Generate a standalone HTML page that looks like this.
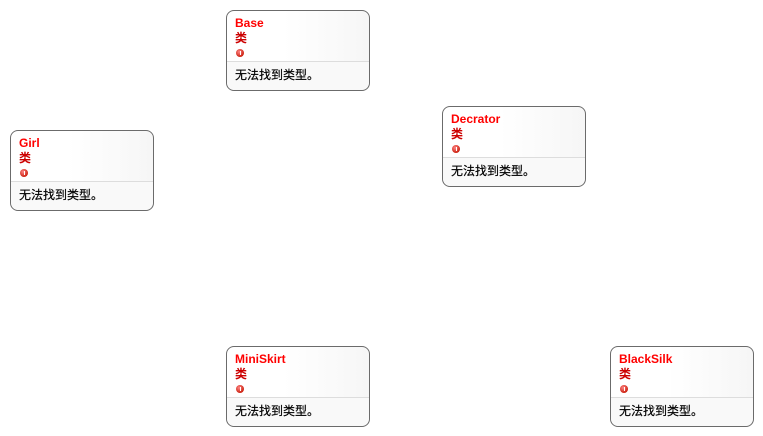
<!DOCTYPE html><html><head><style>
body{margin:0;width:763px;height:436px;background:#fff;position:relative;overflow:hidden;font-family:"Liberation Sans","Noto Sans CJK SC",sans-serif}
.b{position:absolute;width:142px;height:79px;border:1px solid #6b6b6b;border-radius:8px;background:linear-gradient(90deg,#fff 40%,#f6f6f6);}
.t{position:absolute;left:8px;top:5px;color:#f00;font-weight:bold;font-size:12px}
.c{position:absolute;left:8px;top:21px;color:#c00;font-size:12px;line-height:13px;font-weight:bold}
.i{position:absolute;left:9px;top:38px;width:8px;height:8px;border-radius:50%;background:radial-gradient(circle at 40% 35%,#f88,#c21 70%);}
.i:after{content:"";position:absolute;left:3.5px;top:2px;width:1px;height:4px;background:#fff}
.d{position:absolute;left:0;right:0;top:50px;border-top:1px solid #ddd;}
.x{position:absolute;left:8px;top:55px;font-size:12px;color:#000;-webkit-text-stroke:0.2px #000}
.lo{position:absolute;left:0;right:0;top:51px;bottom:0;background:#f9f9f9;border-radius:0 0 8px 8px}
</style></head><body>
<div class="b" style="left:226px;top:10px"><div class="lo"></div><div class="t">Base</div><div class="c">类</div><div class="i"></div><div class="d"></div><div class="x">无法找到类型。</div></div>
<div class="b" style="left:442px;top:106px"><div class="lo"></div><div class="t">Decrator</div><div class="c">类</div><div class="i"></div><div class="d"></div><div class="x">无法找到类型。</div></div>
<div class="b" style="left:10px;top:130px"><div class="lo"></div><div class="t">Girl</div><div class="c">类</div><div class="i"></div><div class="d"></div><div class="x">无法找到类型。</div></div>
<div class="b" style="left:226px;top:346px"><div class="lo"></div><div class="t">MiniSkirt</div><div class="c">类</div><div class="i"></div><div class="d"></div><div class="x">无法找到类型。</div></div>
<div class="b" style="left:610px;top:346px"><div class="lo"></div><div class="t">BlackSilk</div><div class="c">类</div><div class="i"></div><div class="d"></div><div class="x">无法找到类型。</div></div>
</body></html>
